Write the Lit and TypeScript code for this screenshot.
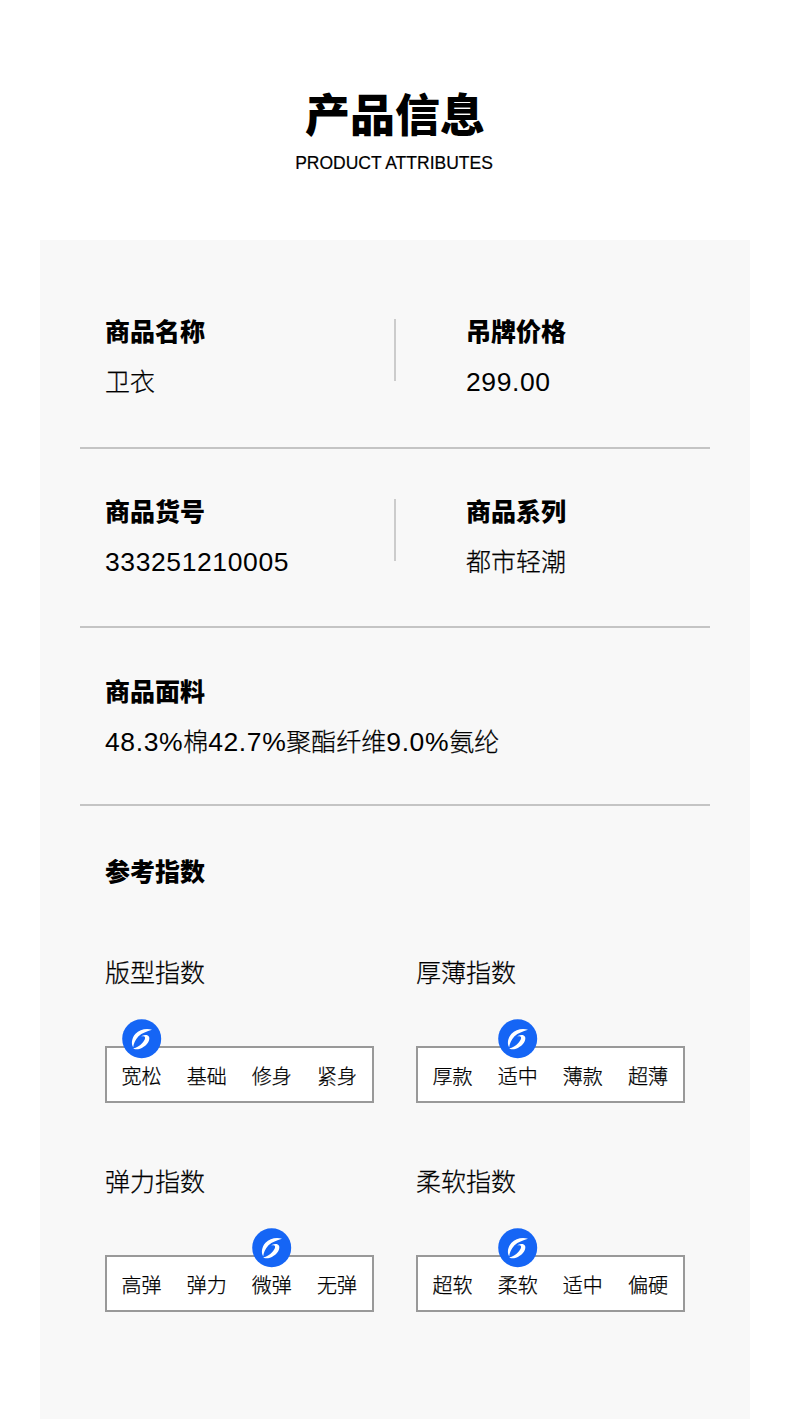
import { LitElement, html, css, svg } from "lit";
import { customElement } from "lit/decorators.js";

const logo = html`<svg class="logo" viewBox="0 0 40 40" aria-hidden="true">
  <circle cx="19.700" cy="19.700" r="19.500" fill="#1565f5"></circle>
  ${svg`<path fill="#fff" d="M30 10.800C24 8.800 17.500 10.800 13.500 14.800 9.800 18.800 8.800 25 11.200 28.200 11.600 24.800 13.200 20.500 16.500 17.200 20 14.300 24.800 12.200 30 10.800Z"></path>
  <path fill="#fff" d="M23 16C26.800 15.700 28.300 18.300 26.800 22 24.800 26.800 18.500 30.800 13.500 30.300 12.400 30.200 11.700 29.900 11.200 29.400 14.500 29 17.800 26.800 20.300 24 23 21 23.800 18.500 22.400 17.500 21.400 17 20 17.100 18.800 17.600 20.300 16.700 21.700 16.200 23 16Z"></path>`}
</svg>`;

interface Gauge { name: string; opts: string[]; active: number; }
const gauges: Gauge[] = [
  { name: "版型指数", opts: ["宽松", "基础", "修身", "紧身"], active: 0 },
  { name: "厚薄指数", opts: ["厚款", "适中", "薄款", "超薄"], active: 1 },
  { name: "弹力指数", opts: ["高弹", "弹力", "微弹", "无弹"], active: 2 },
  { name: "柔软指数", opts: ["超软", "柔软", "适中", "偏硬"], active: 1 },
];

@customElement("app-root")
export class AppRoot extends LitElement {
  static styles = css`
    :host {
      display: block;
      width: 790px;
      height: 1419px;
      overflow: hidden;
      background: #fff;
      color: #000;
      font-family: "Liberation Sans", "Noto Sans CJK SC", sans-serif;
    }
    .head { height: 240px; box-sizing: border-box; padding-top: 89px; text-align: center; }
    h1 { margin: 0; font-size: 45px; line-height: 56px; font-weight: 900; }
    .sub { margin-top: 4px; padding-right: 2px; font-size: 17.5px; line-height: 28px; -webkit-text-stroke: 0.2px #000; }
    .panel { margin: 0 40px; padding: 0 40px; height: 1179px; background: #f8f8f8; }
    .row { display: flex; border-bottom: 2px solid #c4c4c4; box-sizing: border-box; }
    .r1 { height: 209px; padding: 78px 0 0 25px; }
    .r2 { height: 179px; padding: 49px 0 0 25px; }
    .r3 { height: 178px; padding: 50px 0 0 25px; }
    .cell { flex: none; }
    .left { width: 289px; }
    .divider { flex: none; width: 2px; height: 62px; margin-top: 1px; background: #ccc; }
    .right { padding-left: 70px; }
    .label { font-size: 25px; line-height: 28px; font-weight: 900; }
    .value { margin-top: 22px; font-size: 25px; line-height: 28px; font-weight: 300; -webkit-text-stroke: 0.25px #000; }
    .num { font-size: 26.5px; font-weight: 400; letter-spacing: 0.6px; -webkit-text-stroke: 0; }
    .idx { padding: 52px 0 0 25px; }
    .grid { margin-top: 72px; display: grid; grid-template-columns: 269px 269px; column-gap: 42px; row-gap: 64px; }
    .gname { font-size: 25px; line-height: 30px; font-weight: 300; -webkit-text-stroke: 0.25px #000; }
    .box {
      position: relative;
      margin-top: 58px;
      height: 57px;
      box-sizing: border-box;
      border: 2px solid #999;
      background: #fff;
      padding: 5px 15px 0 14.500px;
      display: flex;
      justify-content: space-between;
      align-items: center;
      font-size: 20px;
      font-weight: 300;
      -webkit-text-stroke: 0.25px #000;
    }
    .opt { position: relative; width: 40px; text-align: center; line-height: 24px; white-space: nowrap; }
    .logo { position: absolute; left: 0; top: -46px; width: 40px; height: 40px; display: block; }
  `;

  render() {
    return html`
      <div class="head">
        <h1>产品信息</h1>
        <div class="sub">PRODUCT ATTRIBUTES</div>
      </div>
      <div class="panel">
        <div class="row r1">
          <div class="cell left"><div class="label">商品名称</div><div class="value">卫衣</div></div>
          <div class="divider"></div>
          <div class="cell right"><div class="label">吊牌价格</div><div class="value"><span class="num">299.00</span></div></div>
        </div>
        <div class="row r2">
          <div class="cell left"><div class="label">商品货号</div><div class="value"><span class="num">333251210005</span></div></div>
          <div class="divider"></div>
          <div class="cell right"><div class="label">商品系列</div><div class="value">都市轻潮</div></div>
        </div>
        <div class="row r3">
          <div class="cell"><div class="label">商品面料</div><div class="value"><span class="num">48.3%</span>棉<span class="num">42.7%</span>聚酯纤维<span class="num">9.0%</span>氨纶</div></div>
        </div>
        <div class="idx">
          <div class="label">参考指数</div>
          <div class="grid">
            ${gauges.map(
              (g) => html`<div>
                <div class="gname">${g.name}</div>
                <div class="box">
                  ${g.opts.map(
                    (o, i) => html`<div class="opt">${i === g.active ? logo : ""}${o}</div>`
                  )}
                </div>
              </div>`
            )}
          </div>
        </div>
      </div>
    `;
  }
}
